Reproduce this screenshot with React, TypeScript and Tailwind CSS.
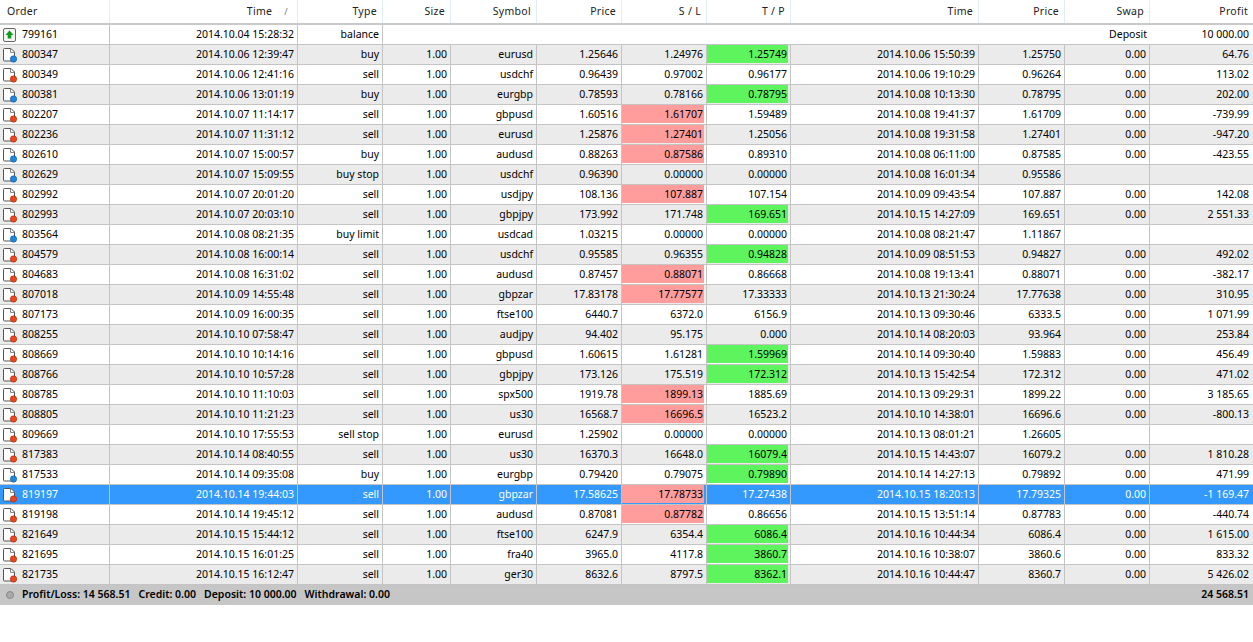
type Row = {
  order: string;
  time: string;
  type: string;
  symbol?: string;
  price?: string;
  sl?: string;
  tp?: string;
  closeTime?: string;
  closePrice?: string;
  swap?: string;
  profit?: string;
  hit?: "sl" | "tp";
  selected?: boolean;
};

const rows: Row[] = [
  { order: "800347", time: "2014.10.06 12:39:47", type: "buy", symbol: "eurusd", price: "1.25646", sl: "1.24976", tp: "1.25749", closeTime: "2014.10.06 15:50:39", closePrice: "1.25750", swap: "0.00", profit: "64.76", hit: "tp" },
  { order: "800349", time: "2014.10.06 12:41:16", type: "sell", symbol: "usdchf", price: "0.96439", sl: "0.97002", tp: "0.96177", closeTime: "2014.10.06 19:10:29", closePrice: "0.96264", swap: "0.00", profit: "113.02" },
  { order: "800381", time: "2014.10.06 13:01:19", type: "buy", symbol: "eurgbp", price: "0.78593", sl: "0.78166", tp: "0.78795", closeTime: "2014.10.08 10:13:30", closePrice: "0.78795", swap: "0.00", profit: "202.00", hit: "tp" },
  { order: "802207", time: "2014.10.07 11:14:17", type: "sell", symbol: "gbpusd", price: "1.60516", sl: "1.61707", tp: "1.59489", closeTime: "2014.10.08 19:41:37", closePrice: "1.61709", swap: "0.00", profit: "-739.99", hit: "sl" },
  { order: "802236", time: "2014.10.07 11:31:12", type: "sell", symbol: "eurusd", price: "1.25876", sl: "1.27401", tp: "1.25056", closeTime: "2014.10.08 19:31:58", closePrice: "1.27401", swap: "0.00", profit: "-947.20", hit: "sl" },
  { order: "802610", time: "2014.10.07 15:00:57", type: "buy", symbol: "audusd", price: "0.88263", sl: "0.87586", tp: "0.89310", closeTime: "2014.10.08 06:11:00", closePrice: "0.87585", swap: "0.00", profit: "-423.55", hit: "sl" },
  { order: "802629", time: "2014.10.07 15:09:55", type: "buy stop", symbol: "usdchf", price: "0.96390", sl: "0.00000", tp: "0.00000", closeTime: "2014.10.08 16:01:34", closePrice: "0.95586" },
  { order: "802992", time: "2014.10.07 20:01:20", type: "sell", symbol: "usdjpy", price: "108.136", sl: "107.887", tp: "107.154", closeTime: "2014.10.09 09:43:54", closePrice: "107.887", swap: "0.00", profit: "142.08", hit: "sl" },
  { order: "802993", time: "2014.10.07 20:03:10", type: "sell", symbol: "gbpjpy", price: "173.992", sl: "171.748", tp: "169.651", closeTime: "2014.10.15 14:27:09", closePrice: "169.651", swap: "0.00", profit: "2 551.33", hit: "tp" },
  { order: "803564", time: "2014.10.08 08:21:35", type: "buy limit", symbol: "usdcad", price: "1.03215", sl: "0.00000", tp: "0.00000", closeTime: "2014.10.08 08:21:47", closePrice: "1.11867" },
  { order: "804579", time: "2014.10.08 16:00:14", type: "sell", symbol: "usdchf", price: "0.95585", sl: "0.96355", tp: "0.94828", closeTime: "2014.10.09 08:51:53", closePrice: "0.94827", swap: "0.00", profit: "492.02", hit: "tp" },
  { order: "804683", time: "2014.10.08 16:31:02", type: "sell", symbol: "audusd", price: "0.87457", sl: "0.88071", tp: "0.86668", closeTime: "2014.10.08 19:13:41", closePrice: "0.88071", swap: "0.00", profit: "-382.17", hit: "sl" },
  { order: "807018", time: "2014.10.09 14:55:48", type: "sell", symbol: "gbpzar", price: "17.83178", sl: "17.77577", tp: "17.33333", closeTime: "2014.10.13 21:30:24", closePrice: "17.77638", swap: "0.00", profit: "310.95", hit: "sl" },
  { order: "807173", time: "2014.10.09 16:00:35", type: "sell", symbol: "ftse100", price: "6440.7", sl: "6372.0", tp: "6156.9", closeTime: "2014.10.13 09:30:46", closePrice: "6333.5", swap: "0.00", profit: "1 071.99" },
  { order: "808255", time: "2014.10.10 07:58:47", type: "sell", symbol: "audjpy", price: "94.402", sl: "95.175", tp: "0.000", closeTime: "2014.10.14 08:20:03", closePrice: "93.964", swap: "0.00", profit: "253.84" },
  { order: "808669", time: "2014.10.10 10:14:16", type: "sell", symbol: "gbpusd", price: "1.60615", sl: "1.61281", tp: "1.59969", closeTime: "2014.10.14 09:30:40", closePrice: "1.59883", swap: "0.00", profit: "456.49", hit: "tp" },
  { order: "808766", time: "2014.10.10 10:57:28", type: "sell", symbol: "gbpjpy", price: "173.126", sl: "175.519", tp: "172.312", closeTime: "2014.10.13 15:42:54", closePrice: "172.312", swap: "0.00", profit: "471.02", hit: "tp" },
  { order: "808785", time: "2014.10.10 11:10:03", type: "sell", symbol: "spx500", price: "1919.78", sl: "1899.13", tp: "1885.69", closeTime: "2014.10.13 09:29:31", closePrice: "1899.22", swap: "0.00", profit: "3 185.65", hit: "sl" },
  { order: "808805", time: "2014.10.10 11:21:23", type: "sell", symbol: "us30", price: "16568.7", sl: "16696.5", tp: "16523.2", closeTime: "2014.10.10 14:38:01", closePrice: "16696.6", swap: "0.00", profit: "-800.13", hit: "sl" },
  { order: "809669", time: "2014.10.10 17:55:53", type: "sell stop", symbol: "eurusd", price: "1.25902", sl: "0.00000", tp: "0.00000", closeTime: "2014.10.13 08:01:21", closePrice: "1.26605" },
  { order: "817383", time: "2014.10.14 08:40:55", type: "sell", symbol: "us30", price: "16370.3", sl: "16648.0", tp: "16079.4", closeTime: "2014.10.15 14:43:07", closePrice: "16079.2", swap: "0.00", profit: "1 810.28", hit: "tp" },
  { order: "817533", time: "2014.10.14 09:35:08", type: "buy", symbol: "eurgbp", price: "0.79420", sl: "0.79075", tp: "0.79890", closeTime: "2014.10.14 14:27:13", closePrice: "0.79892", swap: "0.00", profit: "471.99", hit: "tp" },
  { order: "819197", time: "2014.10.14 19:44:03", type: "sell", symbol: "gbpzar", price: "17.58625", sl: "17.78733", tp: "17.27438", closeTime: "2014.10.15 18:20:13", closePrice: "17.79325", swap: "0.00", profit: "-1 169.47", hit: "sl", selected: true },
  { order: "819198", time: "2014.10.14 19:45:12", type: "sell", symbol: "audusd", price: "0.87081", sl: "0.87782", tp: "0.86656", closeTime: "2014.10.15 13:51:14", closePrice: "0.87783", swap: "0.00", profit: "-440.74", hit: "sl" },
  { order: "821649", time: "2014.10.15 15:44:12", type: "sell", symbol: "ftse100", price: "6247.9", sl: "6354.4", tp: "6086.4", closeTime: "2014.10.16 10:44:34", closePrice: "6086.4", swap: "0.00", profit: "1 615.00", hit: "tp" },
  { order: "821695", time: "2014.10.15 16:01:25", type: "sell", symbol: "fra40", price: "3965.0", sl: "4117.8", tp: "3860.7", closeTime: "2014.10.16 10:38:07", closePrice: "3860.6", swap: "0.00", profit: "833.32", hit: "tp" },
  { order: "821735", time: "2014.10.15 16:12:47", type: "sell", symbol: "ger30", price: "8632.6", sl: "8797.5", tp: "8362.1", closeTime: "2014.10.16 10:44:47", closePrice: "8360.7", swap: "0.00", profit: "5 426.02", hit: "tp" },
];

const gridCols =
  "grid grid-cols-[110px_188px_85px_68px_86px_85px_85px_84px_188px_86px_85px_104px]";

function OrderIcon({ kind }: { kind: "buy" | "sell" }) {
  const dot = kind === "buy" ? "#1f86dc" : "#e8481c";
  const rim = kind === "buy" ? "#0f5aa6" : "#a92c0c";
  return (
    <svg width="16" height="16" viewBox="0 0 16 16" className="shrink-0">
      <path d="M2.500 1.500h6.500l3.500 3.500v9h-10a1 1 0 0 1-1-1v-10.500a1 1 0 0 1 1-1z" fill="#fff" stroke="#555" />
      <path d="M8.500 1.500v4h4" fill="none" stroke="#888" />
      <circle cx="11.500" cy="12" r="3.200" fill={dot} stroke={rim} strokeWidth="0.6" />
    </svg>
  );
}

function BalanceIcon() {
  return (
    <svg width="16" height="16" viewBox="0 0 16 16" className="shrink-0">
      <rect x="1.500" y="1.500" width="12" height="13" rx="1.500" fill="#f4f4f4" stroke="#666" />
      <path d="M7.500 3.500l4 4.500h-2.200v3.500h-3.600v-3.500h-2.200z" fill="#0f9a1c" />
    </svg>
  );
}

function HeadCell({ label, left }: { label: string; left?: boolean }) {
  return (
    <div
      className={`flex h-full items-center border-r border-[#e3edf7] px-[5px] tracking-[0.3px] ${
        left ? "justify-start pl-[7px]" : "justify-end"
      }`}
    >
      {label}
    </div>
  );
}

function Cell({ children, tone }: { children?: React.ReactNode; tone?: "sl" | "tp" }) {
  return (
    <div className="flex h-full items-start justify-end border-r border-[#c4c4c4] pr-[2px]">
      <div
        className={`flex h-[18px] w-full items-center justify-end pt-[1px] pr-[1px] ${
          tone === "sl" ? "bg-[#ff9c9c] text-black" : tone === "tp" ? "bg-[#5ef45e] text-black" : ""
        }`}
      >
        {children}
      </div>
    </div>
  );
}

function TradeRow({ row, index }: { row: Row; index: number }) {
  const bg = row.selected ? "bg-[#3399ff] text-white" : index % 2 === 0 ? "bg-[#ebebeb]" : "bg-white";
  const kind = row.type.startsWith("buy") ? "buy" : "sell";
  return (
    <div className={`${gridCols} h-5 border-b border-[#c4c4c4] ${bg}`}>
      <div className="flex h-full items-center gap-[4px] border-r border-[#c4c4c4] pl-[2px]">
        <OrderIcon kind={kind} />
        <span>{row.order}</span>
      </div>
      <Cell>{row.time}</Cell>
      <Cell>{row.type}</Cell>
      <Cell>1.00</Cell>
      <Cell>{row.symbol}</Cell>
      <Cell>{row.price}</Cell>
      <Cell tone={row.hit === "sl" ? "sl" : undefined}>{row.sl}</Cell>
      <Cell tone={row.hit === "tp" ? "tp" : undefined}>{row.tp}</Cell>
      <Cell>{row.closeTime}</Cell>
      <Cell>{row.closePrice}</Cell>
      <Cell>{row.swap}</Cell>
      <div className="flex h-[18px] items-center justify-end pt-[1px] pr-[5px]">{row.profit}</div>
    </div>
  );
}

export default function App() {
  return (
    <div className="h-[642px] w-[1253px] overflow-hidden bg-white text-[10.5px] text-black [font-family:'Noto_Sans',sans-serif]">
      <div className={`${gridCols} h-[25px] border-b-2 border-[#c9c9c9] text-[#222]`}>
        <HeadCell label="Order" left />
        <div className="flex h-full items-center justify-end gap-[12px] border-r border-[#e3edf7] pr-[9px] tracking-[0.3px]">
          <span>Time</span>
          <span className="text-[9px] text-[#777]">/</span>
        </div>
        <HeadCell label="Type" />
        <HeadCell label="Size" />
        <HeadCell label="Symbol" />
        <HeadCell label="Price" />
        <HeadCell label="S / L" />
        <HeadCell label="T / P" />
        <HeadCell label="Time" />
        <HeadCell label="Price" />
        <HeadCell label="Swap" />
        <HeadCell label="Profit" />
      </div>

      <div className={`${gridCols} h-5 border-b border-[#c4c4c4]`}>
        <div className="flex h-full items-center gap-[4px] border-r border-[#c4c4c4] pl-[2px]">
          <BalanceIcon />
          <span>799161</span>
        </div>
        <Cell>2014.10.04 15:28:32</Cell>
        <Cell>balance</Cell>
        <div className="col-span-7" />
        <div className="flex h-[18px] items-center justify-end pt-[1px] pr-[3px]">Deposit</div>
        <div className="flex h-[18px] items-center justify-end pt-[1px] pr-[5px]">10 000.00</div>
      </div>

      {rows.map((row, i) => (
        <TradeRow key={row.order} row={row} index={i} />
      ))}

      <div className="flex h-5 items-center justify-between bg-[#c6c6c6] pr-[4px] font-semibold">
        <div className="flex items-center gap-[8px] pl-[6px]">
          <span className="h-[8px] w-[8px] rounded-full border border-[#888] bg-[#aaa]" />
          <span>Profit/Loss: 14 568.51</span>
          <span>Credit: 0.00</span>
          <span>Deposit: 10 000.00</span>
          <span>Withdrawal: 0.00</span>
        </div>
        <span>24 568.51</span>
      </div>
    </div>
  );
}
